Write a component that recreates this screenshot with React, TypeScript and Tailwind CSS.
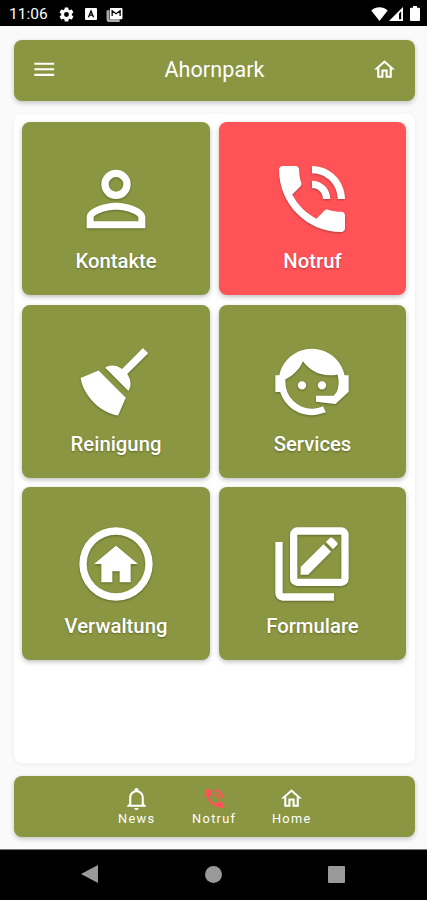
import React from "react";

const icons = {
  menu: "M3 6h18v2H3V6m0 5h18v2H3v-2m0 5h18v2H3v-2z",
  home: "M12 5.69L17 10.19V18H15V12H9V18H7V10.19L12 5.69M12 3L2 12H5V20H11V14H13V20H19V12H22L12 3Z",
  person:
    "M12,4A4,4 0 0,1 16,8A4,4 0 0,1 12,12A4,4 0 0,1 8,8A4,4 0 0,1 12,4M12,6A2,2 0 0,0 10,8A2,2 0 0,0 12,10A2,2 0 0,0 14,8A2,2 0 0,0 12,6M12,13C14.67,13 20,14.33 20,17V20H4V17C4,14.33 9.33,13 12,13M12,14.9C9.03,14.9 5.9,16.36 5.9,17V18.1H18.1V17C18.1,16.36 14.97,14.9 12,14.9Z",
  phone:
    "M20 15.5c-1.25 0-2.45-.2-3.57-.57-.35-.11-.74-.03-1.02.24l-2.2 2.2c-2.83-1.44-5.15-3.75-6.59-6.59l2.2-2.21c.28-.26.36-.65.25-1C8.7 6.45 8.5 5.25 8.5 4c0-.55-.45-1-1-1H4c-.55 0-1 .45-1 1 0 9.39 7.61 17 17 17 .55 0 1-.45 1-1v-3.5c0-.55-.45-1-1-1zM19 12h2c0-4.97-4.03-9-9-9v2c3.87 0 7 3.13 7 7zm-4 0h2c0-2.76-2.24-5-5-5v2c1.66 0 3 1.34 3 3z",
  broom:
    "M19.36,2.72L20.78,4.14L15.06,9.85C16.13,11.39 16.28,13.24 15.38,14.44L9.06,8.12C10.26,7.22 12.11,7.37 13.65,8.44L19.36,2.72M5.93,17.57C3.92,15.56 2.69,13.16 2.35,10.92L7.23,8.83L14.67,16.27L12.58,21.15C10.34,20.81 7.94,19.58 5.93,17.57Z",
  agent:
    "M18.72,14.76C19.07,13.91 19.26,13 19.26,12C19.26,11.28 19.15,10.59 18.96,9.95C18.31,10.1 17.63,10.18 16.92,10.18C13.86,10.18 11.15,8.67 9.5,6.34C8.61,8.5 6.91,10.26 4.77,11.22C4.73,11.47 4.73,11.74 4.73,12A7.27,7.27 0 0,0 12,19.27C13.05,19.27 14.06,19.04 14.97,18.63C15.54,19.72 15.8,20.26 15.78,20.26C14.14,20.81 12.87,21.08 12,21.08C9.58,21.08 7.27,20.13 5.57,18.42C4.53,17.38 3.76,16.11 3.33,14.73H2V10.18H3.09C3.93,6.04 7.6,2.92 12,2.92C14.4,2.92 16.71,3.87 18.42,5.58C19.69,6.84 20.54,8.45 20.89,10.18H22V14.73H21.94L18.38,18L13.08,17.4V15.73H17.91L18.72,14.76M9.27,11.77a1.14,1.14 0 1,1 0,2.28a1.14,1.14 0 1,1 0,-2.28M14.72,11.77a1.14,1.14 0 1,1 0,2.28a1.14,1.14 0 1,1 0,-2.28Z",
  homeCircle:
    "M12 2a10 10 0 1 0 0 20a10 10 0 1 0 0-20M12 4a8 8 0 1 1 0 16a8 8 0 1 1 0-16M12 7L6 12H8V17H11V14H13V17H16V12H18L12 7Z",
  forms:
    "M8 2H20A2 2 0 0 1 22 4V16A2 2 0 0 1 20 18H8A2 2 0 0 1 6 16V4A2 2 0 0 1 8 2M8 4V16H20V4H8M2 6H4V20H18V22H4A2 2 0 0 1 2 20V6M8.9 12.8L15.15 6.6L17.2 8.65L10.95 14.9H8.9V12.8M15.75 6L16.9 4.9Q17.25 4.6 17.6 4.9L18.85 6.15Q19.15 6.5 18.85 6.85L17.75 8L15.75 6Z",
  bell: "M10 21H14C14 22.1 13.1 23 12 23S10 22.1 10 21M21 19V20H3V19L5 17V11C5 7.9 7.03 5.17 10 4.29C10 4.19 10 4.1 10 4C10 2.9 10.9 2 12 2S14 2.9 14 4C14 4.1 14 4.19 14 4.29C16.97 5.17 19 7.9 19 11V17L21 19M17 11C17 8.24 14.76 6 12 6S7 8.24 7 11V18H17V11Z",
  gear: "M12,8.5A3.5,3.5 0 1,0 12,15.5A3.5,3.5 0 1,0 12,8.5M19.43,12.97C19.47,12.65 19.5,12.33 19.5,12C19.5,11.67 19.47,11.34 19.43,11L21.54,9.37C21.73,9.22 21.78,8.95 21.66,8.73L19.66,5.27C19.54,5.05 19.27,4.96 19.05,5.05L16.56,6.05C16.04,5.66 15.5,5.32 14.87,5.07L14.5,2.42C14.46,2.18 14.25,2 14,2H10C9.75,2 9.54,2.18 9.5,2.42L9.13,5.07C8.5,5.32 7.96,5.66 7.44,6.05L4.95,5.05C4.73,4.96 4.46,5.05 4.34,5.27L2.34,8.73C2.21,8.95 2.27,9.22 2.46,9.37L4.57,11C4.53,11.34 4.5,11.67 4.5,12C4.5,12.33 4.53,12.65 4.57,12.97L2.46,14.63C2.27,14.78 2.21,15.05 2.34,15.27L4.34,18.73C4.46,18.95 4.73,19.03 4.95,18.95L7.44,17.94C7.96,18.34 8.5,18.68 9.13,18.93L9.5,21.58C9.54,21.82 9.75,22 10,22H14C14.25,22 14.46,21.82 14.5,21.58L14.87,18.93C15.5,18.67 16.04,18.34 16.56,17.94L19.05,18.95C19.27,19.03 19.54,18.95 19.66,18.73L21.66,15.27C21.78,15.05 21.73,14.78 21.54,14.63L19.43,12.97Z",
};

type IconName = keyof typeof icons;

function Icon({ name, className }: { name: IconName; className: string }) {
  return (
    <svg viewBox="0 0 24 24" fill="currentColor" fillRule="evenodd" className={`shrink-0 ${className}`}>
      <path d={icons[name]} />
    </svg>
  );
}

function StatusBar() {
  return (
    <div className="flex h-[26px] shrink-0 items-center bg-black pr-[7px] pl-[9px] text-white">
      <span className="w-[39px] pt-[3px] text-[15.5px] leading-none whitespace-nowrap">11:06</span>
      <Icon name="gear" className="mt-[2px] ml-[10px] size-[17px]" />
      <svg viewBox="0 0 12 12" className="mt-[2px] ml-[10px] size-[12px]">
        <rect width="12" height="12" rx="1" fill="white" />
        <path d="M3.5 9.2L6 3l2.5 6.2M4.5 7.2h3" fill="none" stroke="black" strokeWidth="1.3" />
      </svg>
      <svg viewBox="0 0 17 16" className="mt-[2px] ml-[9px] h-[15px] w-[17px]">
        <path d="M1.500 3.5V13a1.500 1.500 0 0 0 1.500 1.500h11" fill="none" stroke="#aaa" strokeWidth="3" />
        <rect x="3.500" y="1" width="13.500" height="12" rx="1" fill="white" />
        <path d="M6 9.500V4l4.200 3.2L14.500 4v5.500" fill="none" stroke="black" strokeWidth="1.4" />
      </svg>
      <div className="flex-1" />
      <svg viewBox="0 0 17 14" className="mt-[1px] h-[14px] w-[17px]" fill="white">
        <path d="M.3 3.6C5-.8 12-.8 16.7 3.6L8.5 14z" />
      </svg>
      <svg viewBox="0 0 14 14" className="mt-[1px] ml-[1px] size-[14px]">
        <path d="M14 0v14H0z" fill="white" />
        <path d="M10 6.5L12.2 4.3V12.3H10z" fill="black" />
      </svg>
      <svg viewBox="0 0 10 15" className="mt-[1px] ml-[7px] h-[15px] w-[10px]" fill="white">
        <path d="M3 0h4v1.7h2a1 1 0 0 1 1 1V14a1 1 0 0 1-1 1H1a1 1 0 0 1-1-1V2.7a1 1 0 0 1 1-1h2z" />
      </svg>
    </div>
  );
}

const tiles: { icon: IconName; label: string; emergency?: boolean }[] = [
  { icon: "person", label: "Kontakte" },
  { icon: "phone", label: "Notruf", emergency: true },
  { icon: "broom", label: "Reinigung" },
  { icon: "agent", label: "Services" },
  { icon: "homeCircle", label: "Verwaltung" },
  { icon: "forms", label: "Formulare" },
];

const navItems: { icon: IconName; label: string; color: string }[] = [
  { icon: "bell", label: "News", color: "text-white" },
  { icon: "phone", label: "Notruf", color: "text-[#ff5357]" },
  { icon: "home", label: "Home", color: "text-white" },
];

export default function App() {
  return (
    <div className="flex h-[900px] w-[427px] flex-col overflow-hidden bg-[#fafafa] font-['Roboto',sans-serif] text-white">
      <StatusBar />

      <header className="mt-[13.5px] mr-[12px] ml-[13.5px] flex h-[61px] shrink-0 items-center justify-between rounded-[8px] bg-[#8a9641] pr-[18px] pl-[17px] shadow-[0_2px_5px_rgba(0,0,0,0.22)]">
        <Icon name="menu" className="-mt-[2px] size-[26.5px]" />
        <h1 className="text-[21.5px] tracking-[0.1px]">Ahornpark</h1>
        <Icon name="home" className="-mt-px size-[25px]" />
      </header>

      <main className="mt-[13px] mr-[12px] ml-[13.5px] h-[649px] shrink-0 rounded-[8px] bg-white px-[8.8px] pt-[8.5px] shadow-[0_1px_5px_rgba(0,0,0,0.06)]">
        <div className="grid grid-cols-2 gap-x-[9px] gap-y-[9.5px]">
          {tiles.map((tile) => (
            <button
              key={tile.label}
              className={`flex h-[173px] flex-col items-center rounded-[8px] pt-[33px] shadow-[0_2px_5px_rgba(0,0,0,0.25)] ${
                tile.emergency ? "bg-[#ff5357]" : "bg-[#8a9641]"
              }`}
            >
              <Icon name={tile.icon} className="size-[88px] drop-shadow-[0_1px_1px_rgba(0,0,0,0.3)]" />
              <span className="mt-[6px] text-[20.3px] leading-[24px] font-medium [text-shadow:0_1px_2px_rgba(0,0,0,0.3)]">
                {tile.label}
              </span>
            </button>
          ))}
        </div>
      </main>

      <nav className="mt-[13.5px] mr-[12px] ml-[13.5px] flex h-[61px] shrink-0 justify-center rounded-[8px] bg-[#8a9641] pt-[10px] shadow-[0_2px_5px_rgba(0,0,0,0.22)]">
        {navItems.map((item) => (
          <button key={item.label} className="flex w-[77.5px] flex-col items-center">
            <Icon name={item.icon} className={`size-[25px] ${item.color}`} />
            <span className="text-[12.8px] leading-[15px] tracking-[1.3px]">{item.label}</span>
          </button>
        ))}
      </nav>

      <footer className="mt-auto flex h-[51px] shrink-0 items-center justify-between border-t border-[#777] bg-black pr-[82px] pb-[2px] pl-[81px]">
        <svg viewBox="0 0 17 18" className="h-[18px] w-[17px]" fill="#999">
          <path d="M17 0v18L0 9z" />
        </svg>
        <div className="size-[17px] rounded-full bg-[#999]" />
        <div className="size-[17px] rounded-[1px] bg-[#999]" />
      </footer>
    </div>
  );
}
